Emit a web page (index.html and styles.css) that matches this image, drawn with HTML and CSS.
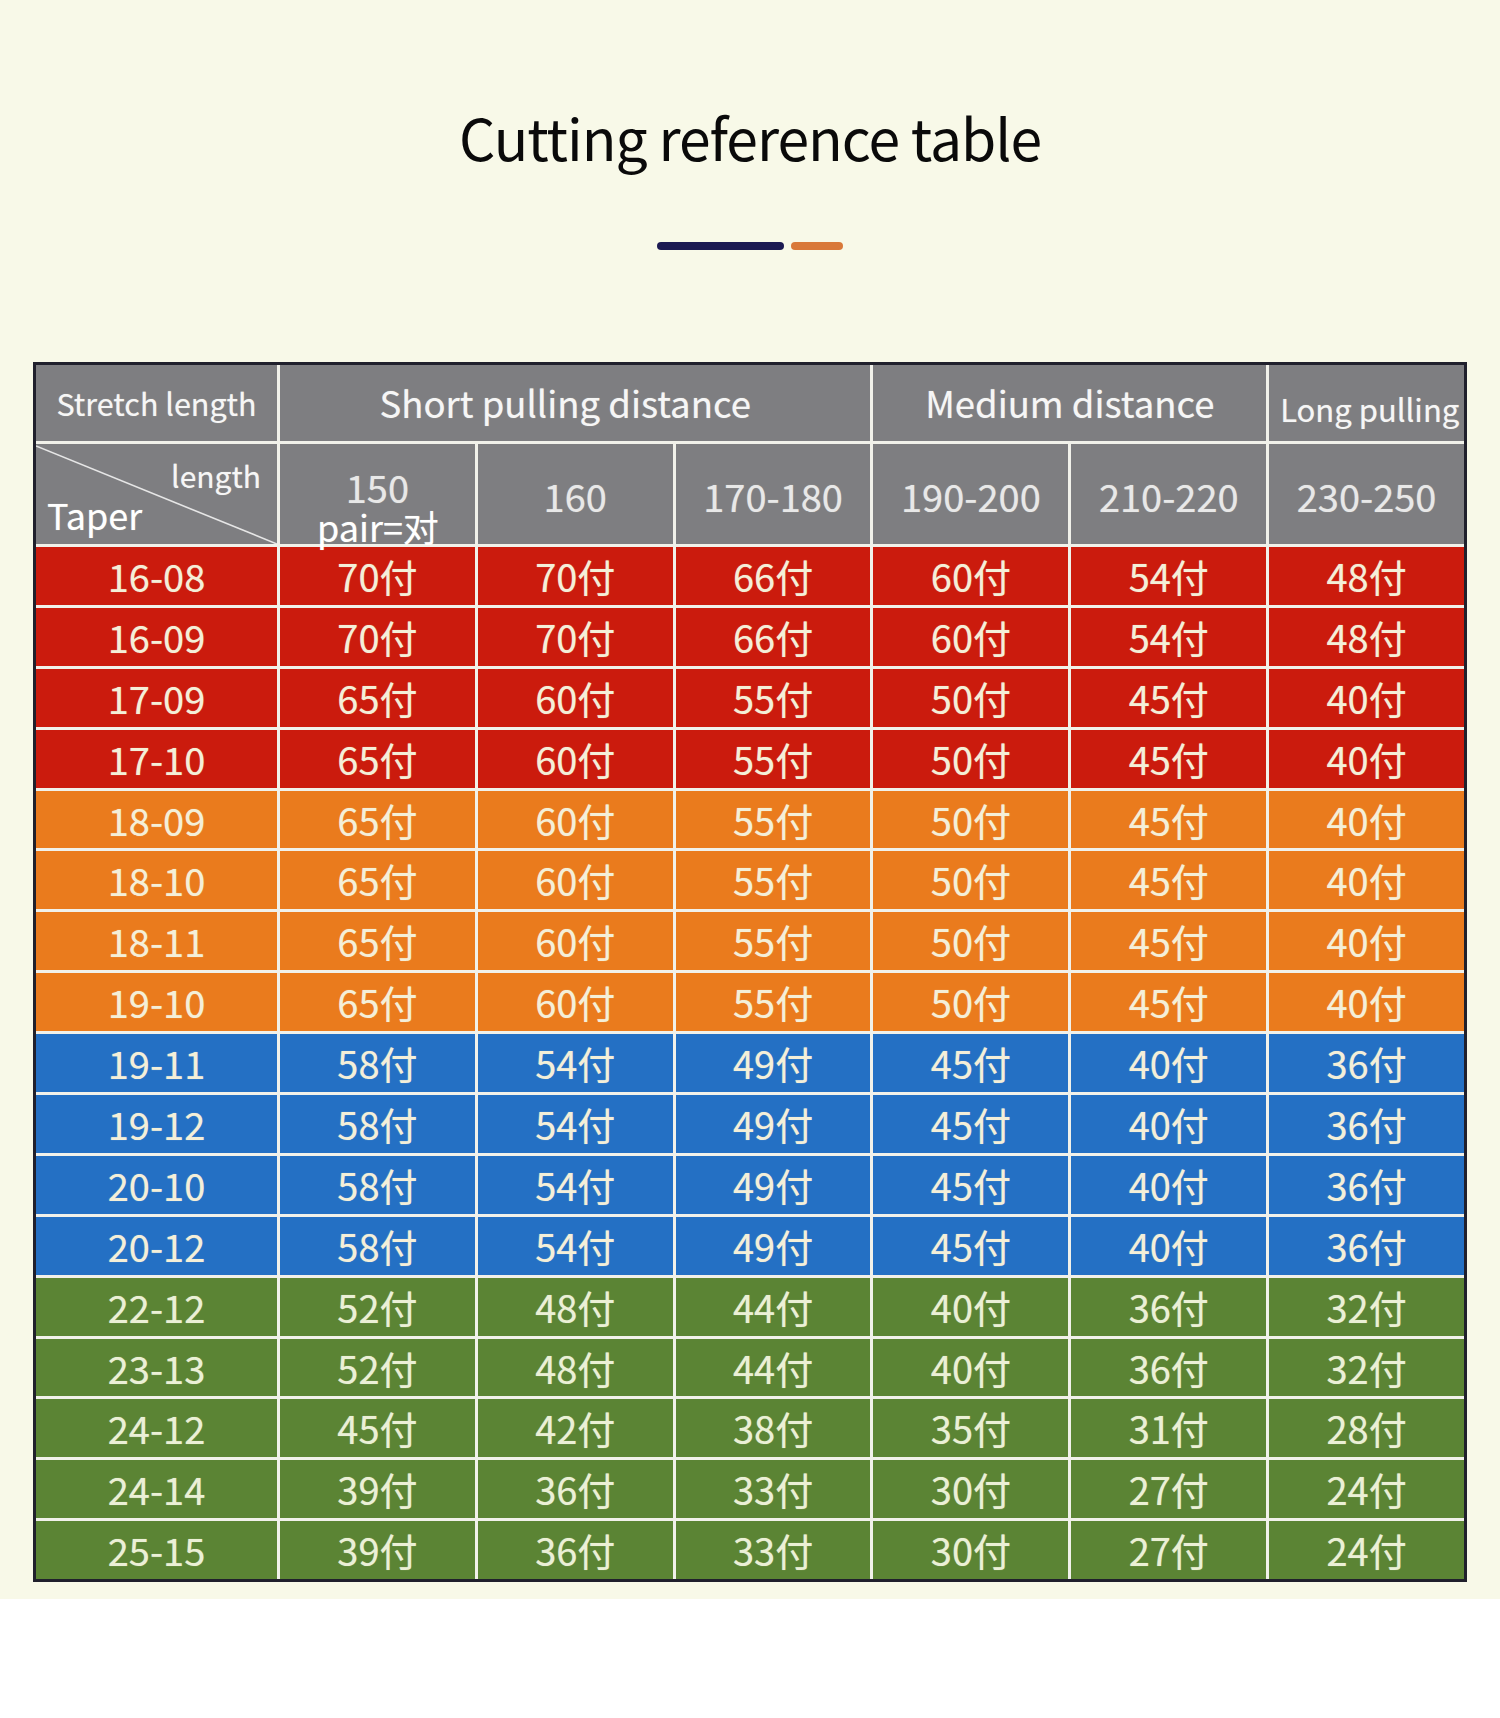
FILE: index.html
```html
<!DOCTYPE html>
<html lang="en">
<head>
<meta charset="utf-8">
<title>Cutting reference table</title>
<link rel="stylesheet" href="styles.css">
</head>
<body>
<div class="sheet">
  <h1 class="title">Cutting reference table</h1>
  <div class="rule"><span class="rule-navy"></span><span class="rule-orange"></span></div>
  <div class="chart">
    <div class="cell head h1">Stretch length</div>
    <div class="cell head h1 big span3 short">Short pulling distance</div>
    <div class="cell head h1 big span2">Medium distance</div>
    <div class="cell head h1 long">Long pulling</div>

    <div class="cell head diag">
      <svg class="diag-line" viewBox="0 0 100 100" preserveAspectRatio="none"><line x1="0" y1="2" x2="100" y2="100" stroke="#e6e6e6" stroke-width="1.6" vector-effect="non-scaling-stroke"/></svg>
      <span class="diag-top">length</span>
      <span class="diag-bottom">Taper</span>
    </div>
    <div class="cell head num first"><span class="first-num">150</span><span class="pair">pair=对</span></div>
    <div class="cell head num">160</div>
    <div class="cell head num">170-180</div>
    <div class="cell head num">190-200</div>
    <div class="cell head num">210-220</div>
    <div class="cell head num">230-250</div>

    <div class="cell red">16-08</div><div class="cell red">70付</div><div class="cell red">70付</div><div class="cell red">66付</div><div class="cell red">60付</div><div class="cell red">54付</div><div class="cell red">48付</div>
    <div class="cell red">16-09</div><div class="cell red">70付</div><div class="cell red">70付</div><div class="cell red">66付</div><div class="cell red">60付</div><div class="cell red">54付</div><div class="cell red">48付</div>
    <div class="cell red">17-09</div><div class="cell red">65付</div><div class="cell red">60付</div><div class="cell red">55付</div><div class="cell red">50付</div><div class="cell red">45付</div><div class="cell red">40付</div>
    <div class="cell red">17-10</div><div class="cell red">65付</div><div class="cell red">60付</div><div class="cell red">55付</div><div class="cell red">50付</div><div class="cell red">45付</div><div class="cell red">40付</div>

    <div class="cell orange">18-09</div><div class="cell orange">65付</div><div class="cell orange">60付</div><div class="cell orange">55付</div><div class="cell orange">50付</div><div class="cell orange">45付</div><div class="cell orange">40付</div>
    <div class="cell orange">18-10</div><div class="cell orange">65付</div><div class="cell orange">60付</div><div class="cell orange">55付</div><div class="cell orange">50付</div><div class="cell orange">45付</div><div class="cell orange">40付</div>
    <div class="cell orange">18-11</div><div class="cell orange">65付</div><div class="cell orange">60付</div><div class="cell orange">55付</div><div class="cell orange">50付</div><div class="cell orange">45付</div><div class="cell orange">40付</div>
    <div class="cell orange">19-10</div><div class="cell orange">65付</div><div class="cell orange">60付</div><div class="cell orange">55付</div><div class="cell orange">50付</div><div class="cell orange">45付</div><div class="cell orange">40付</div>

    <div class="cell blue">19-11</div><div class="cell blue">58付</div><div class="cell blue">54付</div><div class="cell blue">49付</div><div class="cell blue">45付</div><div class="cell blue">40付</div><div class="cell blue">36付</div>
    <div class="cell blue">19-12</div><div class="cell blue">58付</div><div class="cell blue">54付</div><div class="cell blue">49付</div><div class="cell blue">45付</div><div class="cell blue">40付</div><div class="cell blue">36付</div>
    <div class="cell blue">20-10</div><div class="cell blue">58付</div><div class="cell blue">54付</div><div class="cell blue">49付</div><div class="cell blue">45付</div><div class="cell blue">40付</div><div class="cell blue">36付</div>
    <div class="cell blue">20-12</div><div class="cell blue">58付</div><div class="cell blue">54付</div><div class="cell blue">49付</div><div class="cell blue">45付</div><div class="cell blue">40付</div><div class="cell blue">36付</div>

    <div class="cell green">22-12</div><div class="cell green">52付</div><div class="cell green">48付</div><div class="cell green">44付</div><div class="cell green">40付</div><div class="cell green">36付</div><div class="cell green">32付</div>
    <div class="cell green">23-13</div><div class="cell green">52付</div><div class="cell green">48付</div><div class="cell green">44付</div><div class="cell green">40付</div><div class="cell green">36付</div><div class="cell green">32付</div>
    <div class="cell green">24-12</div><div class="cell green">45付</div><div class="cell green">42付</div><div class="cell green">38付</div><div class="cell green">35付</div><div class="cell green">31付</div><div class="cell green">28付</div>
    <div class="cell green">24-14</div><div class="cell green">39付</div><div class="cell green">36付</div><div class="cell green">33付</div><div class="cell green">30付</div><div class="cell green">27付</div><div class="cell green">24付</div>
    <div class="cell green">25-15</div><div class="cell green">39付</div><div class="cell green">36付</div><div class="cell green">33付</div><div class="cell green">30付</div><div class="cell green">27付</div><div class="cell green">24付</div>
  </div>
</div>
</body>
</html>
```
FILE: styles.css
```css
html, body {
  margin: 0;
  padding: 0;
  background: #ffffff;
}

body {
  font-family: "Noto Sans CJK SC", "Noto Sans", sans-serif;
}

.sheet {
  background: #f8f9e8;
  padding: 96px 33px 17px 33px;
}

.title {
  margin: 0;
  text-align: center;
  font-weight: 400;
  font-size: 57px;
  line-height: 80px;
  color: #0a0a0a;
  letter-spacing: -1px;
}

.rule {
  display: flex;
  justify-content: center;
  gap: 7px;
  margin-top: 66px;
  height: 8px;
}

.rule-navy {
  width: 127px;
  height: 8px;
  border-radius: 4px;
  background: #1c1a52;
}

.rule-orange {
  width: 52px;
  height: 8px;
  border-radius: 4px;
  background: #d9793a;
}

.chart {
  margin-top: 112px;
  display: grid;
  grid-template-columns: 241px repeat(6, 1fr);
  grid-template-rows: 76px 100px repeat(17, 57.9px);
  gap: 3px;
  background: #f1f1ea;
  border: 3px solid #20202c;
}

.cell {
  display: flex;
  align-items: center;
  justify-content: center;
  color: #f4efd8;
  font-size: 38px;
  line-height: 1;
  white-space: nowrap;
  overflow: hidden;
  text-shadow: 0 0 1px rgba(255, 255, 240, 0.5);
}

.head {
  background: #7e7e81;
  color: #eeeeee;
}

.h1 {
  font-size: 30.5px;
  color: #f6f6f6;
}

.big {
  font-size: 36.5px;
}

.short {
  padding-right: 20px;
}

.span3 { grid-column: span 3; }
.span2 { grid-column: span 2; }

.long {
  justify-content: flex-start;
  padding-left: 11px;
  padding-top: 10px;
  font-size: 31px;
}

.num {
  color: #e8e8e8;
  font-size: 38px;
  padding-top: 4px;
}

.first {
  position: relative;
  overflow: visible;
  align-items: flex-start;
  padding-top: 24px;
}

.first-num {
  line-height: 38px;
  height: 38px;
}

.pair {
  position: absolute;
  left: 37px;
  bottom: 0;
  font-size: 36px;
  line-height: 36px;
  color: #ffffff;
}

.diag {
  position: relative;
}

.diag-line {
  position: absolute;
  left: 0;
  top: 0;
  width: 100%;
  height: 100%;
}

.diag-top {
  position: absolute;
  right: 16px;
  top: 16px;
  font-size: 30px;
  color: #f6f6f6;
}

.diag-bottom {
  position: absolute;
  left: 11px;
  top: 52px;
  font-size: 36px;
  color: #ffffff;
}

.red { background: #cb1b0d; }
.orange { background: #ea7b1d; }
.blue { background: #2470c4; }
.green { background: #5b8434; color: #ebf0d6; }
```
